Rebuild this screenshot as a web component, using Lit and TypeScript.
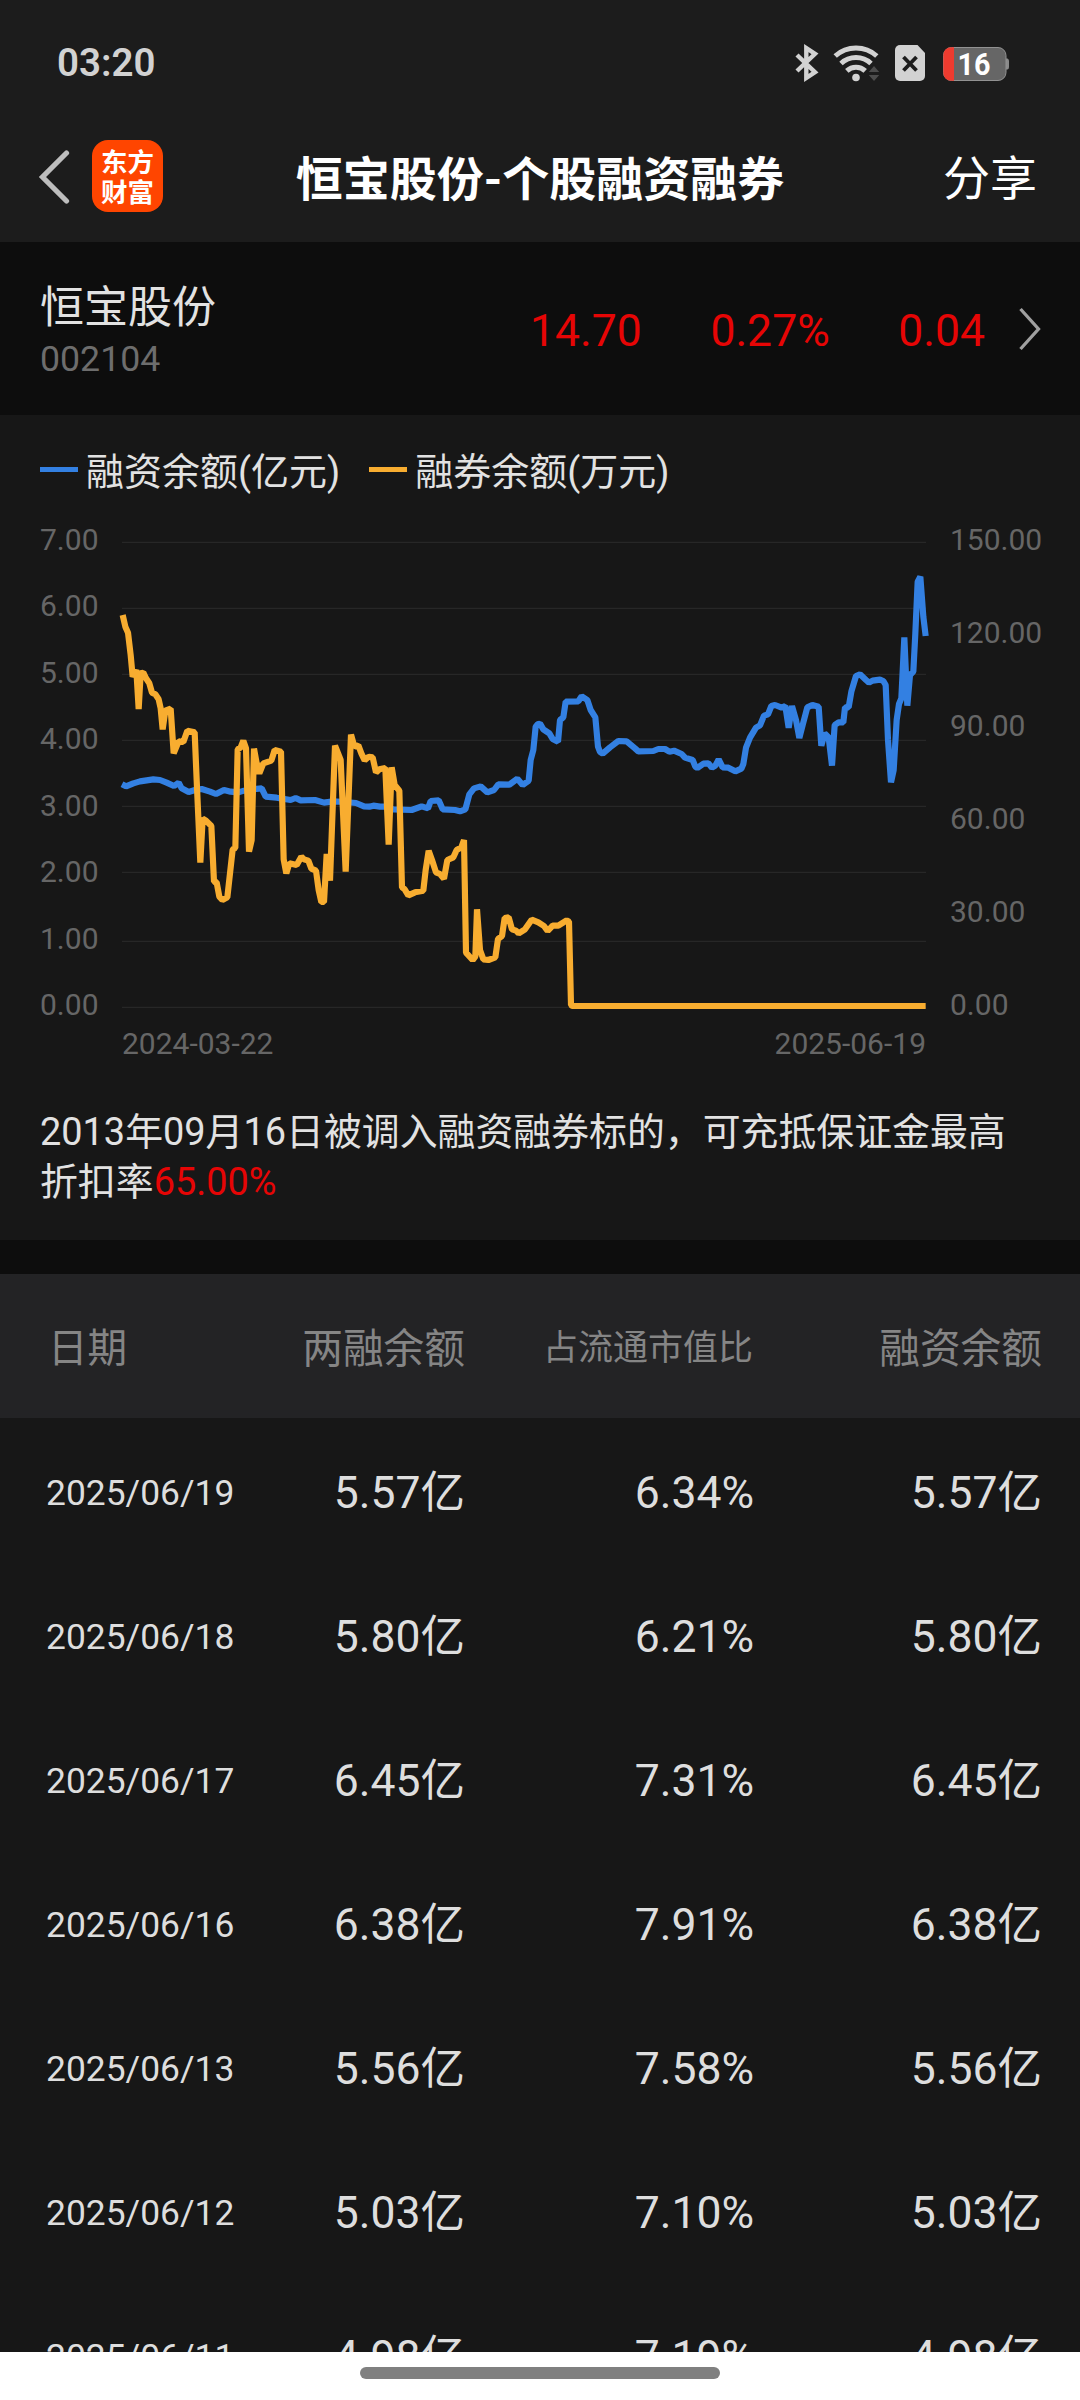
import { LitElement, html, css, svg } from "lit";
import { customElement, property } from "lit/decorators.js";

const FONT = css`Roboto, "Noto Sans CJK SC", sans-serif`;

type Row = { date: string; total: string; ratio: string; margin: string };

const ROWS: Row[] = [
  { date: "2025/06/19", total: "5.57亿", ratio: "6.34%", margin: "5.57亿" },
  { date: "2025/06/18", total: "5.80亿", ratio: "6.21%", margin: "5.80亿" },
  { date: "2025/06/17", total: "6.45亿", ratio: "7.31%", margin: "6.45亿" },
  { date: "2025/06/16", total: "6.38亿", ratio: "7.91%", margin: "6.38亿" },
  { date: "2025/06/13", total: "5.56亿", ratio: "7.58%", margin: "5.56亿" },
  { date: "2025/06/12", total: "5.03亿", ratio: "7.10%", margin: "5.03亿" },
  { date: "2025/06/11", total: "4.98亿", ratio: "7.19%", margin: "4.98亿" },
];

const LEFT_AXIS = ["7.00", "6.00", "5.00", "4.00", "3.00", "2.00", "1.00", "0.00"];
const RIGHT_AXIS = ["150.00", "120.00", "90.00", "60.00", "30.00", "0.00"];
const GRID_Y = [-113, 85, 283, 481, 679, 877, 1084, 1282];

/* Series vertices, in thirds of a pixel. */
const LENDING =
  "68,105 76,140 84,158 92,225 98,290 109,270 116,387 122,280 130,278 138,295 148,310 156,338 166,343 176,358 182,385 188,448 196,392 212,386 221,520 236,484 250,486 262,452 284,457 290,600 301,848 308,716 318,722 334,738 342,905 350,907 358,950 367,960 382,952 390,880 398,808 406,804 413,508 422,502 430,482 438,505 447,815 455,780 462,506 470,550 478,580 490,550 514,542 524,510 543,515 551,838 559,880 568,850 590,855 604,830 612,838 625,842 634,866 648,872 656,930 664,966 672,966 680,822 690,902 705,497 722,540 737,875 753,464 763,500 775,496 784,520 794,541 806,530 818,532 828,577 838,568 856,564 866,794 875,562 884,615 898,632 906,922 914,928 925,946 945,937 970,932 977,870 986,812 996,840 1008,877 1020,882 1032,896 1042,840 1060,832 1070,810 1084,802 1092,780 1098,1118 1118,1140 1126,1130 1131,988 1140,1110 1150,1138 1165,1140 1186,1132 1194,1077 1206,1068 1214,1014 1226,1012 1236,1048 1248,1052 1256,1060 1275,1048 1295,1019 1315,1027 1332,1038 1343,1053 1358,1037 1375,1037 1400,1021 1407,1025 1413,1275 1418,1278 2477,1278";
const FINANCING =
  "66,613 78,619 100,610 120,604 160,598 180,600 200,608 222,618 236,608 245,625 266,636 285,630 305,627 330,635 348,642 372,630 392,635 415,637 432,632 455,628 485,625 497,650 530,653 572,660 587,654 602,661 645,660 672,668 700,664 735,666 768,669 792,679 808,680 820,677 840,680 856,680 880,688 935,690 965,679 984,685 992,663 1016,661 1028,688 1065,690 1080,694 1096,688 1108,643 1122,625 1142,619 1162,637 1182,630 1195,613 1228,614 1252,596 1268,615 1286,602 1292,540 1300,510 1307,440 1313,433 1320,431 1330,448 1348,460 1358,477 1374,485 1380,420 1390,412 1397,365 1435,364 1445,349 1462,360 1472,390 1486,412 1494,500 1500,516 1508,521 1530,502 1555,483 1580,484 1605,505 1615,514 1660,513 1675,507 1695,507 1708,515 1722,512 1745,522 1755,533 1778,540 1786,560 1792,564 1810,551 1825,550 1836,563 1846,557 1856,538 1868,562 1885,563 1906,574 1924,566 1930,552 1938,503 1950,473 1968,443 1980,436 1992,407 2004,403 2014,378 2025,375 2045,383 2056,378 2066,443 2076,378 2088,420 2098,474 2108,435 2122,382 2137,375 2156,380 2164,497 2174,460 2186,472 2196,557 2204,435 2216,427 2230,427 2235,382 2246,382 2254,335 2268,288 2280,283 2298,300 2307,308 2318,302 2340,299 2350,303 2357,315 2364,480 2373,607 2381,570 2390,420 2397,372 2404,355 2413,172 2422,377 2430,285 2440,275 2446,160 2453,5 2461,-10 2470,110 2477,168";

@customElement("status-bar")
export class StatusBar extends LitElement {
  static styles = css`
    :host {
      display: flex;
      align-items: center;
      justify-content: space-between;
      box-sizing: border-box;
      height: 110px;
      padding: 15px 71px 0 57px;
      font-family: ${FONT};
      color: #d2d2d2;
    }
    .time {
      font-size: 38.5px;
      font-weight: 600;
      line-height: 48px;
    }
    .icons {
      display: block;
      width: 216px;
      height: 40px;
    }
    .level {
      font: 700 31px/1 ${FONT};
      fill: #fff;
    }
  `;

  render() {
    return html`
      <span class="time">03:20</span>
      <svg class="icons" viewBox="793 42 216 40">
        <path
          d="M797 54 L815 71.2 L806.3 77 V47 L815 52.8 L797 70"
          fill="none"
          stroke="#d2d2d2"
          stroke-width="4.4"
        />
        <g fill="none" stroke="#d2d2d2" stroke-width="5">
          <path d="M835.2 55 A31 31 0 0 1 876.8 55" />
          <path d="M841 62.5 A22 22 0 0 1 871 62.5" />
          <path d="M846.8 69.8 A13.5 13.5 0 0 1 865.2 69.8" />
        </g>
        <circle cx="856" cy="76.5" r="3.8" fill="#d2d2d2" />
        <path d="M868.8 71 L874 65 L879.2 71 Z M868.8 74 L874 80 L879.2 74 Z" fill="#4c4c4c" />
        <path
          d="M900 44 H917.5 L925 52 V75 A5 5 0 0 1 920 80 H900 A5 5 0 0 1 895 75 V49 A5 5 0 0 1 900 44 Z"
          fill="#d2d2d2"
        />
        <path d="M903.5 56 L916.5 69.5 M916.5 56 L903.5 69.5" stroke="#1c1c1c" stroke-width="3.8" />
        <path d="M1006 57.5 H1007.5 Q1009 58 1009 60 V66 Q1009 68 1007.5 68.5 H1006 Z" fill="#8a8a8a" />
        <rect x="943.5" y="46.5" width="62.5" height="33" rx="8" fill="#666" stroke="#929292" />
        <path d="M954 46.3 V79.7 H951 A7.7 7.7 0 0 1 943.3 72 V54 A7.7 7.7 0 0 1 951 46.3 Z" fill="#ee3b2f" />
        <text class="level" x="957.5" y="74" textLength="33" lengthAdjust="spacingAndGlyphs">16</text>
      </svg>
    `;
  }
}

@customElement("nav-bar")
export class NavBar extends LitElement {
  static styles = css`
    :host {
      display: grid;
      grid-template-columns: 260px 1fr 260px;
      align-items: center;
      box-sizing: border-box;
      height: 132px;
      font-family: ${FONT};
      color: #fff;
      font-size: 47px;
      line-height: 60px;
    }
    .left {
      display: flex;
      align-items: center;
      gap: 21px;
      padding-left: 38px;
    }
    .back {
      display: block;
      width: 33px;
      height: 56px;
    }
    .logo {
      display: grid;
      align-content: center;
      justify-items: center;
      box-sizing: border-box;
      width: 71px;
      height: 72px;
      border-radius: 16px;
      background: #ff4500;
      font: 700 26.5px/30px "Noto Sans CJK SC", sans-serif;
    }
    .title {
      padding-top: 7px;
      text-align: center;
      font-weight: 700;
      white-space: nowrap;
    }
    .share {
      padding: 6px 43px 0 0;
      text-align: right;
    }
  `;

  render() {
    return html`
      <div class="left">
        <svg class="back" viewBox="0 0 33 56">
          <path d="M28.5 5 L4.5 29 L28.5 53" fill="none" stroke="#bdbdbd" stroke-width="5.2" stroke-linecap="round" />
        </svg>
        <div class="logo"><span>东方</span><span>财富</span></div>
      </div>
      <div class="title">恒宝股份-个股融资融券</div>
      <div class="share">分享</div>
    `;
  }
}

@customElement("stock-summary")
export class StockSummary extends LitElement {
  static styles = css`
    :host {
      display: flex;
      justify-content: space-between;
      align-items: center;
      box-sizing: border-box;
      height: 173px;
      padding: 1px 38px 0 40px;
      background: #0d0d0d;
      font-family: ${FONT};
    }
    .name {
      font-size: 44px;
      line-height: 60px;
      color: #e2e2e2;
    }
    .code {
      font-size: 35.7px;
      line-height: 42px;
      color: #6d6d6d;
    }
    .quote {
      display: flex;
      align-items: center;
      gap: 68.5px;
      padding-top: 3px;
      font-size: 44.5px;
      line-height: 54px;
      color: #e60505;
    }
    .last {
      display: flex;
      align-items: center;
      gap: 33px;
    }
    .more {
      display: block;
      width: 24px;
      height: 46px;
      margin-top: -4px;
    }
  `;

  render() {
    return html`
      <div>
        <div class="name">恒宝股份</div>
        <div class="code">002104</div>
      </div>
      <div class="quote">
        <span>14.70</span>
        <span>0.27%</span>
        <div class="last">
          <span>0.04</span>
          <svg class="more" viewBox="0 0 24 46">
            <path d="M2.5 3 L20.5 23 L2.5 43" fill="none" stroke="#a0a0a0" stroke-width="3.3" />
          </svg>
        </div>
      </div>
    `;
  }
}

@customElement("margin-chart")
export class MarginChart extends LitElement {
  static styles = css`
    :host {
      display: block;
      box-sizing: border-box;
      height: 825px;
      padding: 32px 38px 0 40px;
      background: #171717;
      font-family: ${FONT};
      color: #e2e2e2;
    }
    .legend {
      display: flex;
      gap: 29px;
      font-size: 38px;
      line-height: 50px;
    }
    .item {
      display: flex;
      align-items: center;
      gap: 8px;
    }
    .item::before {
      content: "";
      width: 38px;
      height: 5px;
      margin-top: -5px;
      background: #3380e2;
    }
    .item.lending::before {
      background: #f8ad30;
    }
    .chart {
      display: grid;
      grid-template-columns: 82px 804px 1fr;
      grid-template-rows: 495px 40px;
      margin-top: 28px;
      font-size: 30px;
      line-height: 30px;
      color: #666;
    }
    .axis {
      display: flex;
      flex-direction: column;
      justify-content: space-between;
    }
    .right {
      padding-left: 24px;
    }
    .plot {
      display: block;
      width: 804px;
      height: 480px;
      margin-top: 15px;
      overflow: visible;
    }
    .dates {
      grid-column: 2;
      display: flex;
      justify-content: space-between;
      padding-top: 9px;
    }
    .note {
      margin: 47px 0 0;
      font-size: 37.88px;
      line-height: 50px;
      white-space: nowrap;
    }
    .rate {
      color: #e60505;
    }
  `;

  render() {
    return html`
      <div class="legend">
        <span class="item">融资余额(亿元)</span>
        <span class="item lending">融券余额(万元)</span>
      </div>
      <div class="chart">
        <div class="axis">${LEFT_AXIS.map((v) => html`<span>${v}</span>`)}</div>
        <svg class="plot" viewBox="66 -120 2412 1440">
          ${GRID_Y.map((y) => svg`<path d="M66 ${y} H2478" stroke="#272727" stroke-width="4" />`)}
          <g fill="none" stroke-width="18.5" stroke-linejoin="bevel">
            <polyline points=${FINANCING} stroke="#3380e2" />
            <polyline points=${LENDING} stroke="#f8ad30" />
          </g>
        </svg>
        <div class="axis right">${RIGHT_AXIS.map((v) => html`<span>${v}</span>`)}</div>
        <div class="dates"><span>2024-03-22</span><span>2025-06-19</span></div>
      </div>
      <p class="note">
        2013年09月16日被调入融资融券标的，可充抵保证金最高<br />折扣率<span class="rate">65.00%</span>
      </p>
    `;
  }
}

@customElement("history-table")
export class HistoryTable extends LitElement {
  @property({ attribute: false }) rows: Row[] = [];

  static styles = css`
    :host {
      display: block;
      flex: 1;
      min-height: 0;
      overflow: hidden;
      background: #171717;
      font-family: ${FONT};
    }
    .row {
      display: grid;
      grid-template-columns: 200px 219px 289px 288px;
      align-items: center;
      box-sizing: border-box;
      height: 144px;
      padding: 6px 38px 0 46px;
      font-size: 44.5px;
      line-height: 54px;
      text-align: right;
      white-space: nowrap;
      color: #dedede;
    }
    .date {
      font-size: 35.4px;
      text-align: left;
    }
    .head {
      background: #232325;
      color: #858585;
      font-size: 40.7px;
    }
    .head .date {
      font-size: 39.6px;
      padding-left: 2px;
    }
    .head .small {
      font-size: 35px;
      padding-right: 1px;
    }
  `;

  render() {
    return html`
      <div class="row head">
        <span class="date">日期</span>
        <span>两融余额</span>
        <span class="small">占流通市值比</span>
        <span>融资余额</span>
      </div>
      ${this.rows.map(
        (r) => html`
          <div class="row">
            <span class="date">${r.date}</span>
            <span>${r.total}</span>
            <span>${r.ratio}</span>
            <span>${r.margin}</span>
          </div>
        `,
      )}
    `;
  }
}

@customElement("app-root")
export class AppRoot extends LitElement {
  static styles = css`
    :host {
      display: flex;
      flex-direction: column;
      width: 1080px;
      height: 2400px;
      overflow: hidden;
      background: #1c1c1c;
    }
    .divider {
      flex: none;
      height: 34px;
      background: #0d0d0d;
    }
    .gesture {
      display: flex;
      flex: none;
      justify-content: center;
      box-sizing: border-box;
      height: 48px;
      padding-top: 15px;
      background: #fff;
    }
    .pill {
      width: 360px;
      height: 12px;
      border-radius: 6px;
      background: #808080;
    }
  `;

  render() {
    return html`
      <status-bar></status-bar>
      <nav-bar></nav-bar>
      <stock-summary></stock-summary>
      <margin-chart></margin-chart>
      <div class="divider"></div>
      <history-table .rows=${ROWS}></history-table>
      <div class="gesture"><div class="pill"></div></div>
    `;
  }
}
